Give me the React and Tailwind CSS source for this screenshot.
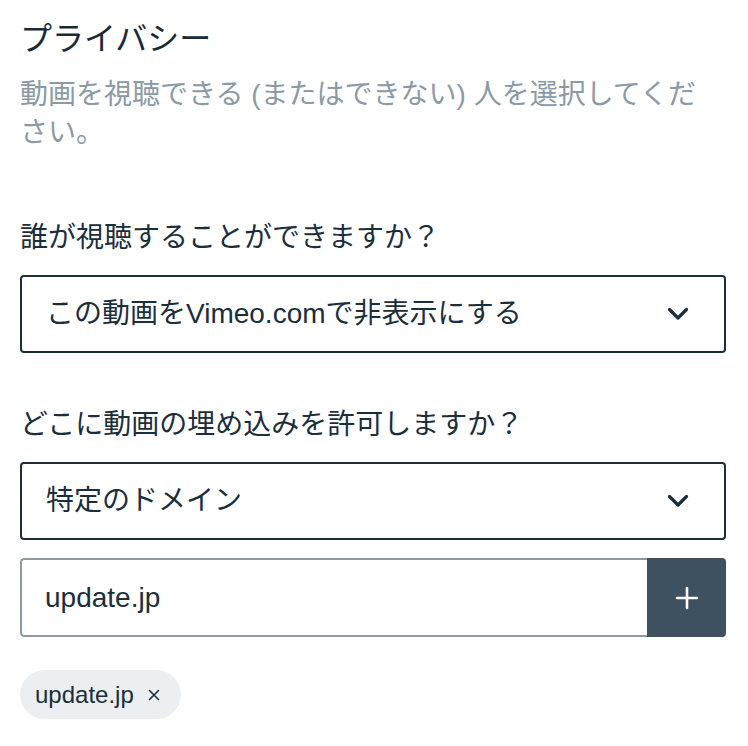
import { useState } from 'react';

const font = 'font-["Liberation_Sans","Noto_Sans_CJK_JP",sans-serif]';

function Chevron() {
  return (
    <svg className="h-4 w-6" viewBox="0 0 24 16" fill="none" stroke="#1a2e3b" strokeWidth={3.2} strokeLinecap="round" strokeLinejoin="round">
      <path d="M3.5 3.5l8.5 8.5 8.5-8.5" />
    </svg>
  );
}

function Select({ value }) {
  return (
    <div className="flex h-[78px] items-center justify-between rounded-[4px] border-2 border-[#1a2e3b] bg-white pl-6 pr-[34px]">
      <span className="text-[28px] leading-none text-[#1a2e3b]">{value}</span>
      <Chevron />
    </div>
  );
}

export default function App() {
  const [domains] = useState(['update.jp']);

  return (
    <div className={`${font} min-h-[746px] bg-white pl-5 pr-[22px] pt-[19px] text-[#1a2e3b]`}>
      {/* Header */}
      <h2 className="text-[32px] leading-[40px] font-normal text-[#1a2b38]">プライバシー</h2>
      <p className="mt-[17px] max-w-[690px] text-[28px] leading-[38px] text-[#8a9aa6]">
        動画を視聴できる (またはできない) 人を選択してください。
      </p>

      {/* Who can watch */}
      <div className="mt-[67px] text-[28px] leading-[38px]">誰が視聴することができますか？</div>
      <div className="mt-[18px]">
        <Select value="この動画をVimeo.comで非表示にする" />
      </div>

      {/* Embed */}
      <div className="mt-[53px] text-[28px] leading-[38px]">どこに動画の埋め込みを許可しますか？</div>
      <div className="mt-[18px]">
        <Select value="特定のドメイン" />
      </div>

      <div className="mt-[18px] flex h-[79px] overflow-hidden rounded-[4px]">
        <div className="flex flex-1 items-center rounded-l-[4px] border-2 border-r-0 border-[#8b9ba6] pl-[23px]">
          <span className="text-[28px] leading-none text-[#1a2e3b]">update.jp</span>
        </div>
        <button className="flex w-[79px] items-center justify-center bg-[#3e5161]">
          <svg className="h-6 w-6" viewBox="0 0 24 24" fill="none" stroke="white" strokeWidth={2.6} strokeLinecap="round">
            <path d="M12 2v20M2 12h20" />
          </svg>
        </button>
      </div>

      {/* Tags */}
      <div className="mt-[33px] flex gap-2">
        {domains.map((d) => (
          <span key={d} className="flex h-[49px] items-center gap-[14px] rounded-full bg-[#eceff1] pl-[15px] pr-[21px]">
            <span className="text-[24px] leading-none text-[#1a2e3b]">{d}</span>
            <svg className="h-[12px] w-[12px]" viewBox="0 0 12 12" stroke="#1a2e3b" strokeWidth={1.6} strokeLinecap="round">
              <path d="M1.5 1.5l9 9M10.5 1.5l-9 9" />
            </svg>
          </span>
        ))}
      </div>
    </div>
  );
}
